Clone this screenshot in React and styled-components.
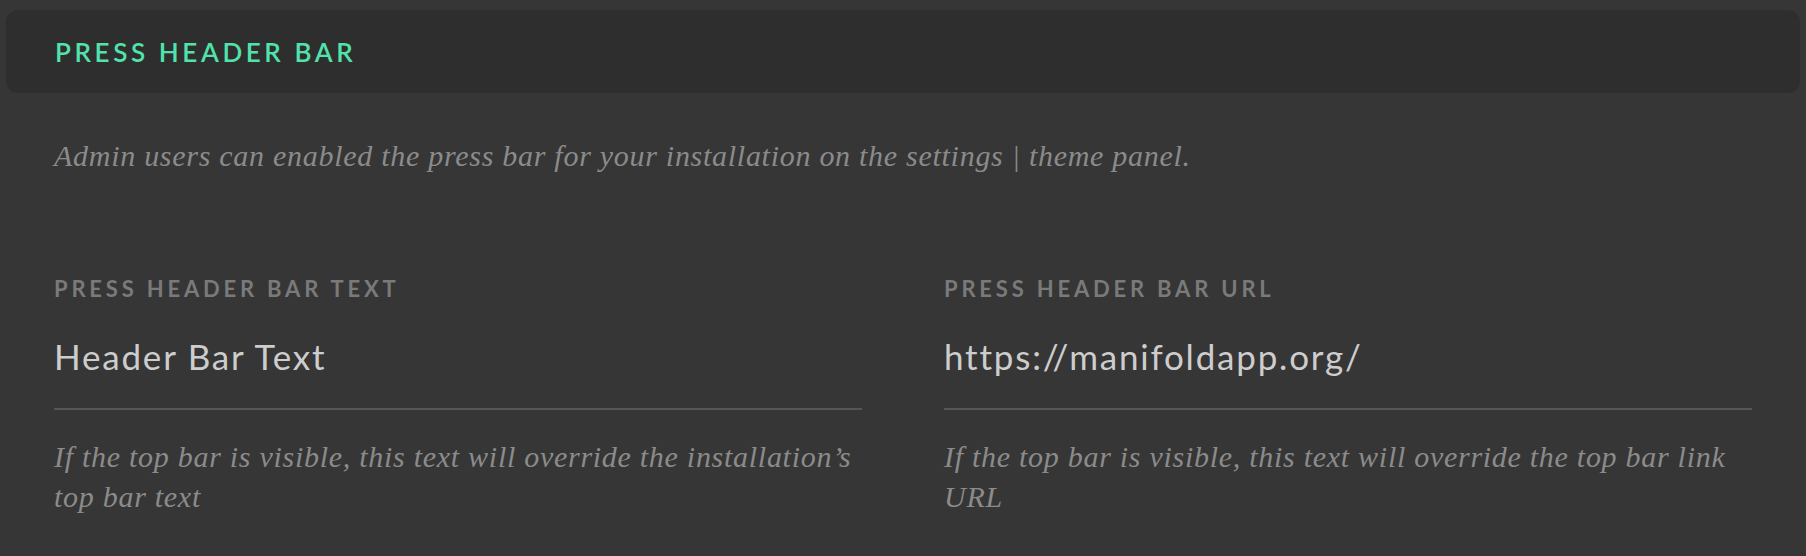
import React from 'react';
import styled, { createGlobalStyle } from 'styled-components';

const GlobalStyle = createGlobalStyle`
  body {
    margin: 0;
    background: #363636;
    font-family: Lato, 'Noto Sans', sans-serif;
  }
`;

const Page = styled.div`
  padding: 10px 6px 0;
`;

const HeaderBar = styled.header`
  display: flex;
  align-items: center;
  height: 83px;
  padding: 0 49px;
  background: #2e2e2e;
  border-radius: 12px;
`;

const Title = styled.h2`
  margin: 0;
  font-family: Lato, sans-serif;
  font-size: 26px;
  font-weight: 600;
  letter-spacing: 3.6px;
  color: #52e3ac;
  text-transform: uppercase;
`;

const Body = styled.div`
  padding: 0 48px;
`;

const Serif = styled.p`
  margin: 0;
  font-family: 'Liberation Serif', 'DejaVu Serif', serif;
  font-style: italic;
  font-size: 30px;
  line-height: 40.5px;
  letter-spacing: 0.72px;
  color: #8b8b8b;
`;

const Intro = styled(Serif)`
  margin-top: 43px;
`;

const Fields = styled.div`
  display: grid;
  grid-template-columns: 1fr 1fr;
  column-gap: 82px;
  margin-top: 99px;
`;

const Field = styled.div`
  display: flex;
  flex-direction: column;
`;

const Label = styled.label`
  font-size: 22px;
  line-height: 26px;
  font-weight: 700;
  letter-spacing: 3.8px;
  color: #7a7a7a;
  text-transform: uppercase;
`;

const Value = styled.div`
  margin-top: 33px;
  padding-bottom: 31px;
  font-size: 35px;
  line-height: 42px;
  letter-spacing: 1.8px;
  color: #cdcdcd;
  border-bottom: 2px solid #565656;
`;

const Help = styled(Serif)`
  margin-top: 27px;
`;

const fields = [
  {
    label: 'Press Header Bar Text',
    value: 'Header Bar Text',
    help: 'If the top bar is visible, this text will override the installation’s top bar text',
  },
  {
    label: 'Press Header Bar URL',
    value: 'https://manifoldapp.org/',
    help: 'If the top bar is visible, this text will override the top bar link URL',
  },
];

export default function App() {
  return (
    <Page>
      <GlobalStyle />
      <HeaderBar>
        <Title>Press Header Bar</Title>
      </HeaderBar>
      <Body>
        <Intro>
          Admin users can enabled the press bar for your installation on the settings | theme panel.
        </Intro>
        <Fields>
          {fields.map(({ label, value, help }) => (
            <Field key={label}>
              <Label>{label}</Label>
              <Value>{value}</Value>
              <Help>{help}</Help>
            </Field>
          ))}
        </Fields>
      </Body>
    </Page>
  );
}
